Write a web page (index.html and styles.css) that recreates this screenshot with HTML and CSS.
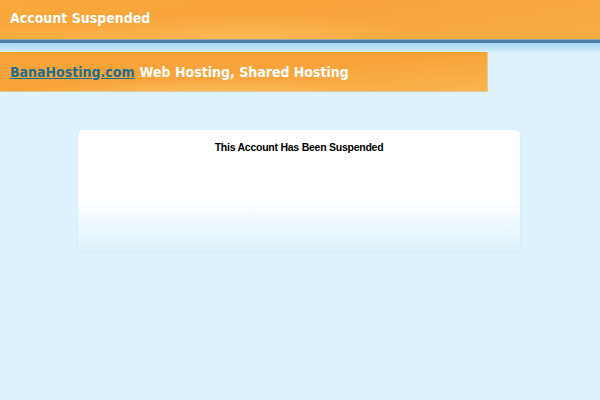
FILE: index.html
```html
<!DOCTYPE html>
<html>
<head>
<meta charset="utf-8">
<link rel="stylesheet" href="styles.css">
</head>
<body>
<div class="top">
  <div class="top-title">Account Suspended</div>
</div>
<div class="rule"></div>
<div class="banner">
  <a class="brand" href="#">BanaHosting.com</a>
  <span class="tag">Web Hosting, Shared Hosting</span>
</div>
<div class="card">
  <div class="card-title">This Account Has Been Suspended</div>
</div>
</body>
</html>
```
FILE: styles.css
```css
html, body {
  margin: 0;
  padding: 0;
}
body {
  background: #ddf2fd;
  width: 600px;
  height: 400px;
  overflow: hidden;
  font-family: "DejaVu Sans Condensed", "DejaVu Sans", Verdana, sans-serif;
  font-stretch: condensed;
}
.top {
  height: 40px;
  background:
    radial-gradient(ellipse 200px 30px at 60px 44px, rgba(255,200,90,0.55), rgba(255,200,90,0) 70%),
    radial-gradient(ellipse 260px 40px at 240px 40px, rgba(255,214,120,0.45), rgba(255,214,120,0) 70%),
    linear-gradient(170deg, #f9aa3c 0%, #f8a23a 40%, #f9ad45 100%);
  display: flex;
  align-items: center;
  padding-left: 10px;
  box-sizing: border-box;
  border-bottom: 1px solid #9aa6a8;
}
.top-title {
  color: #fff;
  font-weight: bold;
  font-size: 14px;
  padding-bottom: 4px;
}
.rule {
  height: 12px;
  background: linear-gradient(#4a7fa6 0px, #4a7fa6 3px, #a9d6ef 3px, #b8e0f4 7px, #d5eefb 12px);
}
.banner {
  width: 488px;
  height: 40px;
  box-sizing: border-box;
  border-right: 1px solid #e0c89a;
  border-bottom: 1px solid #e0c89a;
  background:
    radial-gradient(ellipse 260px 30px at 200px 46px, rgba(255,214,130,0.5), rgba(255,214,130,0) 70%),
    linear-gradient(175deg, #f9a53a 0%, #f8a33a 50%, #fab44e 100%);
  display: flex;
  align-items: center;
  gap: 5px;
  padding-left: 10px;
  font-weight: bold;
  font-size: 14px;
  white-space: nowrap;
}
.brand {
  color: #1e6f8e;
  text-decoration: underline;
}
.tag {
  color: #fff;
}
.card {
  margin: 38px 0 0 78px;
  width: 442px;
  height: 122px;
  border-radius: 4px;
  background: linear-gradient(#ffffff 0%, #ffffff 55%, #e4f5fd 90%, #dcf1fc 100%);
  box-shadow: 0 0 2px rgba(180,215,235,0.6);
}
.card-title {
  text-align: center;
  font-family: "Liberation Sans", Arial, sans-serif;
  font-stretch: normal;
  font-weight: bold;
  font-size: 10.5px;
  letter-spacing: -0.25px;
  color: #000;
  padding-top: 11px;
}
```
